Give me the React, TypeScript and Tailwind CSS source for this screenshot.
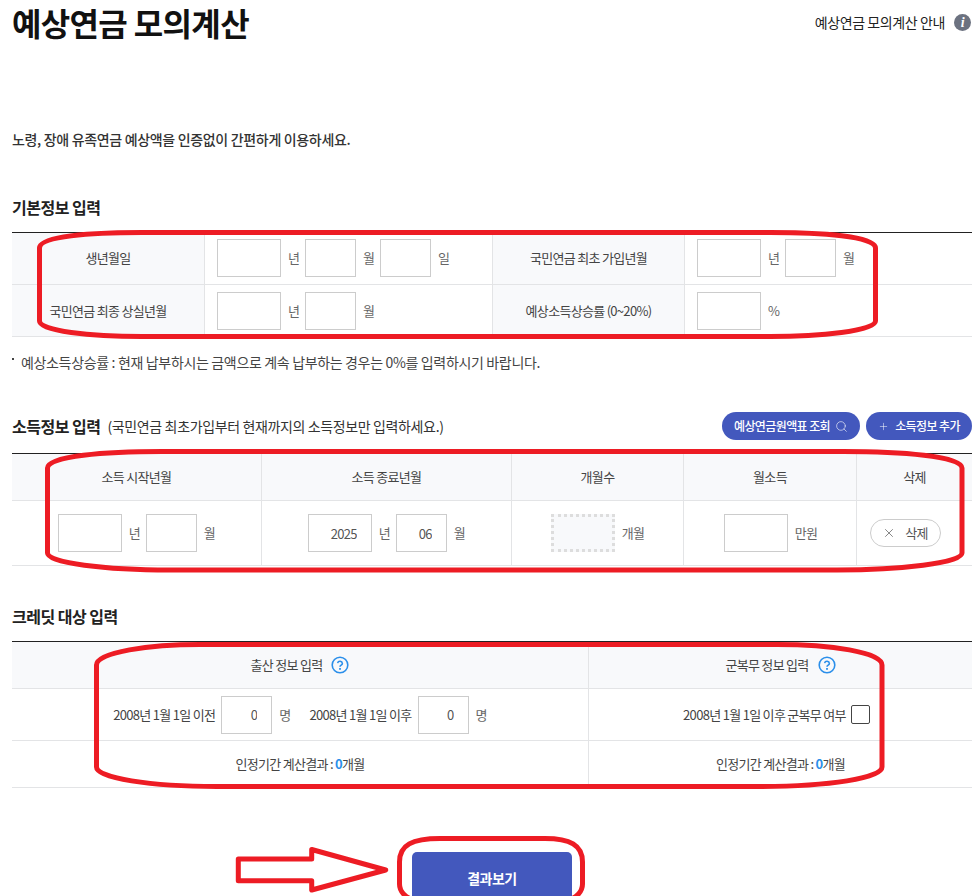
import React from "react";
import { Search, Plus, X } from "lucide-react";

const inputCls =
  "h-[38px] border border-[#cccccc] bg-white text-right pr-[14px] text-[13px] tracking-[-0.7px] text-[#555555] outline-none";

function Box({ w, value }: { w: number; value?: string }) {
  return (
    <input
      readOnly
      defaultValue={value ?? ""}
      className={`${inputCls} ${w === 64 ? "w-[64px]" : "w-[51px]"}`}
    />
  );
}

function Unit({ children, last }: { children: React.ReactNode; last?: boolean }) {
  return (
    <span className={`ml-[7px] whitespace-nowrap text-[#666666] ${last ? "" : "w-[10px] mr-[7px]"}`}>{children}</span>
  );
}

function Th({ children, last, className }: { children: React.ReactNode; last?: boolean; className?: string }) {
  return (
    <th
      className={`bg-[#f8f9fb] border-b border-[#e3e4e6] p-0 font-normal text-center text-[#444444] ${last ? "" : "border-r"} ${className ?? ""}`}
    >
      {children}
    </th>
  );
}

function Td({ children, last, className }: { children?: React.ReactNode; last?: boolean; className?: string }) {
  return (
    <td className={`border-b border-[#e3e4e6] p-0 ${last ? "" : "border-r"} ${className ?? ""}`}>{children}</td>
  );
}

function Help() {
  return (
    <svg width="18" height="18" viewBox="0 0 18 18" fill="none" className="inline-block ml-[9px] align-[-4px]">
      <circle cx="9" cy="9" r="7.8" stroke="#2b8fea" strokeWidth="1.6" />
      <path d="M6.6 7.1a2.45 2.45 0 0 1 4.8.4c0 1.6-2.4 1.8-2.4 3.3" stroke="#2b8fea" strokeWidth="1.6" />
      <rect x="8.1" y="12" width="1.8" height="1.8" fill="#2b8fea" />
    </svg>
  );
}

function Heading({ children }: { children: React.ReactNode }) {
  return <h2 className="text-[16px] font-bold leading-6 tracking-[-0.5px] text-[#222222]">{children}</h2>;
}

export default function App() {
  return (
    <div className="relative h-[896px] w-[979px] overflow-hidden bg-white font-['Noto_Sans_CJK_KR','Noto_Sans',sans-serif] text-[13px] tracking-[-0.7px] text-[#444444]">
      <div className="ml-3 w-[960px]">
        <div className="flex h-[44px] items-center justify-between">
          <h1 className="text-[32px] font-bold leading-[44px] tracking-[-0.65px] text-[#111111]">예상연금 모의계산</h1>
          <div className="flex items-center gap-[9px] pt-[1px] pr-[1px] text-[14px] tracking-[-0.4px] text-[#222222]">
            <span>예상연금 모의계산 안내</span>
            <span className="flex h-[17px] w-[17px] items-center justify-center rounded-full bg-[#6c7280] font-['Liberation_Serif',serif] text-[14px] font-bold italic leading-none text-white">
              i
            </span>
          </div>
        </div>

        <p className="mt-[85px] h-5 text-[14px] font-medium leading-5 tracking-[-0.33px] text-[#333333]">
          노령, 장애 유족연금 예상액을 인증없이 간편하게 이용하세요.
        </p>

        <div className="mt-[46px] mb-[13px]">
          <Heading>기본정보 입력</Heading>
        </div>

        <table className="w-[960px] table-fixed border-separate border-spacing-0 border-t border-[#222222]">
          <colgroup>
            <col className="w-[193px]" />
            <col className="w-[288px]" />
            <col className="w-[192px]" />
            <col className="w-[287px]" />
          </colgroup>
          <tbody>
            <tr className="h-[52px]">
              <Th className="pb-[1px]">생년월일</Th>
              <Td className="pl-3 pb-[1px]">
                <div className="flex items-center">
                  <Box w={64} />
                  <Unit>년</Unit>
                  <Box w={51} />
                  <Unit>월</Unit>
                  <Box w={51} />
                  <Unit last>일</Unit>
                </div>
              </Td>
              <Th className="pb-[1px]">국민연금 최초 가입년월</Th>
              <Td last className="pl-3 pb-[1px]">
                <div className="flex items-center">
                  <Box w={64} />
                  <Unit>년</Unit>
                  <Box w={51} />
                  <Unit last>월</Unit>
                </div>
              </Td>
            </tr>
            <tr className="h-[52px]">
              <Th>국민연금 최종 상실년월</Th>
              <Td className="pl-3">
                <div className="flex items-center">
                  <Box w={64} />
                  <Unit>년</Unit>
                  <Box w={51} />
                  <Unit last>월</Unit>
                </div>
              </Td>
              <Th>예상소득상승률 (0~20%)</Th>
              <Td last className="pl-3">
                <div className="flex items-center">
                  <Box w={64} />
                  <Unit last>%</Unit>
                </div>
              </Td>
            </tr>
          </tbody>
        </table>

        <div className="mt-[15px] flex h-5 items-center text-[14px] tracking-[-0.34px] text-[#444444]">
          <span className="mb-[6px] h-[2px] w-[2px] bg-[#444444]" />
          <span className="ml-[7px]">예상소득상승률 : 현재 납부하시는 금액으로 계속 납부하는 경우는 0%를 입력하시기 바랍니다.</span>
        </div>

        <div className="mt-10 flex h-[28px] items-center">
          <Heading>소득정보 입력</Heading>
          <span className="ml-[7px] text-[14px] tracking-[-0.37px] text-[#333333]">
            (국민연금 최초가입부터 현재까지의 소득정보만 입력하세요.)
          </span>
          <div className="ml-auto flex gap-[6px] text-[12px] font-medium tracking-[-0.6px] text-white">
            <button className="flex h-[28px] w-[138px] items-center justify-center gap-[5px] rounded-full bg-[#4358bd]">
              예상연금원액표 조회
              <Search size={13} strokeWidth={1.1} />
            </button>
            <button className="flex h-[28px] w-[106px] items-center justify-center gap-[6px] rounded-full bg-[#4358bd]">
              <Plus size={11} strokeWidth={1.1} />
              소득정보 추가
            </button>
          </div>
        </div>

        <table className="mt-[13px] w-[960px] table-fixed border-separate border-spacing-0 border-t border-[#222222]">
          <colgroup>
            <col className="w-[250px]" />
            <col className="w-[250px]" />
            <col className="w-[172px]" />
            <col className="w-[173px]" />
            <col className="w-[115px]" />
          </colgroup>
          <tbody>
            <tr className="h-[47px]">
              <Th>소득 시작년월</Th>
              <Th>소득 종료년월</Th>
              <Th>개월수</Th>
              <Th>월소득</Th>
              <Th last>삭제</Th>
            </tr>
            <tr className="h-[65px]">
              <Td>
                <div className="flex items-center justify-center">
                  <Box w={64} />
                  <Unit>년</Unit>
                  <Box w={51} />
                  <Unit last>월</Unit>
                </div>
              </Td>
              <Td>
                <div className="flex items-center justify-center">
                  <Box w={64} value="2025" />
                  <Unit>년</Unit>
                  <Box w={51} value="06" />
                  <Unit last>월</Unit>
                </div>
              </Td>
              <Td>
                <div className="flex items-center justify-center">
                  <span className="h-[38px] w-[64px] border-[3px] border-dotted border-[#dddddd] bg-[#f8f9fb]" />
                  <Unit last>개월</Unit>
                </div>
              </Td>
              <Td>
                <div className="flex items-center justify-center pl-[1px]">
                  <Box w={64} />
                  <Unit last>만원</Unit>
                </div>
              </Td>
              <Td last>
                <div className="flex justify-center pr-[19px]">
                  <button className="flex h-[28px] w-[71px] items-center justify-center gap-[9px] rounded-full border border-[#cccccc] bg-white text-[#555555]">
                    <X size={14} strokeWidth={1.2} />
                    삭제
                  </button>
                </div>
              </Td>
            </tr>
          </tbody>
        </table>

        <div className="mt-[38px] mb-[13px]">
          <Heading>크레딧 대상 입력</Heading>
        </div>

        <table className="w-[960px] table-fixed border-separate border-spacing-0 border-t border-[#222222]">
          <colgroup>
            <col className="w-[577px]" />
            <col className="w-[383px]" />
          </colgroup>
          <tbody>
            <tr className="h-[47px]">
              <Th>
                출산 정보 입력
                <Help />
              </Th>
              <Th last>
                군복무 정보 입력
                <Help />
              </Th>
            </tr>
            <tr className="h-[52px]">
              <Td>
                <div className="flex items-center justify-center">
                  <span className="mr-[6px] text-[#444444]">2008년 1월 1일 이전</span>
                  <Box w={51} value="0" />
                  <Unit last>명</Unit>
                  <span className="ml-[19px] mr-[6px] text-[#444444]">2008년 1월 1일 이후</span>
                  <Box w={51} value="0" />
                  <Unit last>명</Unit>
                </div>
              </Td>
              <Td last>
                <div className="flex items-center justify-center pr-[8px]">
                  <span className="mr-[5px]">2008년 1월 1일 이후 군복무 여부</span>
                  <span className="h-[19px] w-[19px] rounded-[2px] border border-[#444444] bg-white" />
                </div>
              </Td>
            </tr>
            <tr className="h-[47px]">
              <Td className="text-center">
                인정기간 계산결과 : <b className="font-bold text-[#2b8fea]">0</b>개월
              </Td>
              <Td last className="text-center">
                인정기간 계산결과 : <b className="font-bold text-[#2b8fea]">0</b>개월
              </Td>
            </tr>
          </tbody>
        </table>

        <button className="mx-auto mt-[64px] block h-[52px] w-[160px] rounded-[5px] bg-[#4358bd] text-[14px] font-bold tracking-[-0.5px] text-white">
          결과보기
        </button>
      </div>

      <svg className="pointer-events-none absolute left-0 top-0" width="979" height="896" viewBox="0 0 979 896" fill="none" stroke="#ed1c24" strokeWidth="5">
        <path d="M142 232.5H770C820 232.5 875.5 236 875.5 248V321C875.5 331 820 336.5 770 336.5H142C90 336.5 39.5 331 39.5 321V248C39.5 236 90 232.5 142 232.5Z" />
        <path d="M162 451.5H843C900 451.5 962 456 962 468V553C962 563 900 570 837 570H170C105 570 47.5 563 47.5 553V468C47.5 456 105 451.5 162 451.5Z" />
        <path d="M200 644.5H777C830 644.5 882 652 882 665V767C882 778 830 786.5 758 786.5H217C150 786.5 96.5 778 96.5 767V665C96.5 652 150 644.5 200 644.5Z" />
        <path d="M440 838.5H545C570 838.5 582.5 845 582.5 862V884C582.5 892 576 898 568 900H414C406 898 399.5 892 399.5 884V862C399.5 845 412 838.5 440 838.5Z" />
        <path d="M238.3 859H311.7V849.5L385.7 870L311.7 890V880.7H238.3Z" strokeLinejoin="round" />
      </svg>
    </div>
  );
}
